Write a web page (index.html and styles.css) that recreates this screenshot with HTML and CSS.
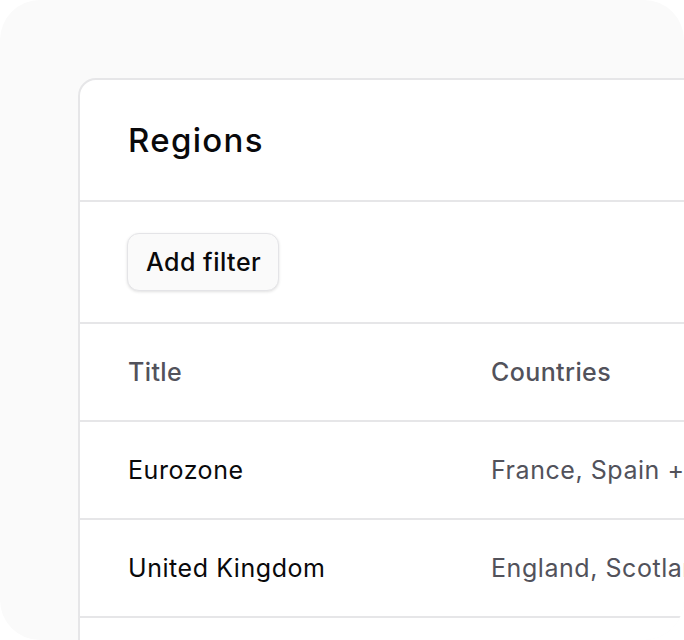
FILE: index.html
```html
<!DOCTYPE html>
<html>
<head>
<meta charset="utf-8">
<link rel="stylesheet" href="styles.css">
</head>
<body>
<div class="frame">
  <div class="card">
    <div class="header"><h1 class="title">Regions</h1></div>
    <div class="toolbar"><button class="btn">Add filter</button></div>
    <div class="row head">
      <div class="cell">Title</div>
      <div class="cell">Countries</div>
    </div>
    <div class="row">
      <div class="cell main">Eurozone</div>
      <div class="cell sub">France, Spain + 3 more</div>
    </div>
    <div class="row">
      <div class="cell main">United Kingdom</div>
      <div class="cell sub">England, Scotland, Wales</div>
    </div>
    <div class="row">
      <div class="cell main"></div>
      <div class="cell sub"></div>
    </div>
  </div>
</div>
</body>
</html>
```
FILE: styles.css
```css
html, body { margin: 0; padding: 0; background: #ffffff; }
body {
  font-family: Inter, "Noto Sans", sans-serif;
}
.frame {
  width: 684px;
  height: 640px;
  background: #fafafa;
  border-radius: 40px;
  overflow: hidden;
  box-sizing: border-box;
  padding: 78px 0 0 78px;
}
.card {
  width: 720px;
  height: 700px;
  background: #ffffff;
  border: 2px solid #e6e6e8;
  border-radius: 18px;
  box-sizing: border-box;
  overflow: hidden;
}
.header {
  height: 122px;
  box-sizing: border-box;
  border-bottom: 2px solid #e6e6e8;
  display: flex;
  align-items: center;
  padding: 0 48px;
}
.title {
  margin: 0;
  font-size: 33px;
  font-weight: 500;
  letter-spacing: 1.3px;
  color: #09090b;
}
.toolbar {
  height: 122px;
  box-sizing: border-box;
  border-bottom: 2px solid #e6e6e8;
  display: flex;
  align-items: center;
  padding: 0 47px;
}
.btn {
  font-family: inherit;
  font-size: 25px;
  font-weight: 500;
  letter-spacing: 0.5px;
  color: #09090b;
  height: 58px;
  padding: 0 17px 0 18px;
  background: #fafafa;
  border: 1px solid #e4e4e7;
  border-radius: 12px;
  box-shadow: 0 1px 3px rgba(0,0,0,0.12);
}
.row {
  display: grid;
  grid-template-columns: 411px 1fr;
  height: 98px;
  box-sizing: border-box;
  border-bottom: 2px solid #e6e6e8;
  align-items: center;
}
.cell {
  padding-left: 48px;
  font-size: 25px;
  letter-spacing: 0.55px;
  white-space: nowrap;
}
.row .cell:nth-child(2) { padding-left: 0; }
.head .cell { color: #52525b; font-weight: 500; letter-spacing: 0.4px; }
.main { color: #09090b; }
.sub { color: #52525b; }
```
